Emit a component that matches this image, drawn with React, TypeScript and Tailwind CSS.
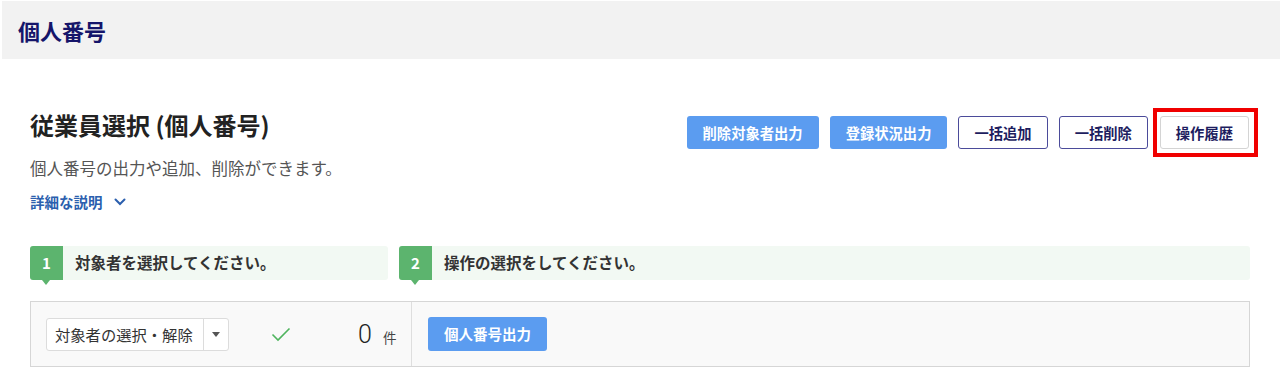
const jp = "font-['Noto_Sans_CJK_JP','Noto_Sans',sans-serif]"

function StepBar({ num, label, className }: { num: number; label: string; className: string }) {
  return (
    <div className={`flex h-[34px] items-stretch rounded-[3px] bg-[#f2f9f3] ${className}`}>
      <div className="relative flex w-[33px] items-center justify-center rounded-l-[3px] bg-[#5cb46e] text-[15px] font-bold text-white">
        {num}
        <span className="absolute left-[12px] top-full h-0 w-0 border-x-[4px] border-t-[5px] border-x-transparent border-t-[#5cb46e]" />
      </div>
      <div className="flex items-center pl-[12px] text-[15.5px] font-bold text-[#333]">{label}</div>
    </div>
  )
}

const blueBtn =
  'h-[33px] rounded-[3px] bg-[#5b9cf0] px-4 text-[14.3px] font-bold text-white'
const outlineBtn =
  'h-[33px] rounded-[3px] border border-[#4b4b9a] bg-white px-[15px] text-[14.3px] font-bold text-[#1d1d5f]'

export default function App() {
  return (
    <div className={`${jp} h-[379px] bg-white`}>
      <div className="ml-[2px] mt-[1px] flex h-[58px] items-center bg-[#f2f2f2] pl-[16px] text-[22px] font-bold text-[#15156a]">
        個人番号
      </div>

      <div className="px-[30px] pt-[50px]">
        <div className="flex items-start justify-between">
          <div>
            <h1 className="text-[24px] font-bold leading-[32px] text-[#222]">従業員選択 (個人番号)</h1>
            <p className="mt-[15px] text-[16.5px] leading-[24px] text-[#555]">
              個人番号の出力や追加、削除ができます。
            </p>
            <button className="mt-[12px] flex h-[20px] items-center gap-[11px] text-[14.5px] font-bold text-[#2b5fae]">
              詳細な説明
              <svg width="12" height="8" viewBox="0 0 12 8" fill="none">
                <path d="M1.5 1.5 6 6l4.5-4.5" stroke="#2b5fae" strokeWidth="2" strokeLinecap="round" />
              </svg>
            </button>
          </div>

          <div className="mt-[7px] flex gap-[11px] pr-[1px]">
            <button className={blueBtn}>削除対象者出力</button>
            <button className={blueBtn}>登録状況出力</button>
            <button className={outlineBtn}>一括追加</button>
            <button className={outlineBtn}>一括削除</button>
            <div className="relative ml-[1px]">
              <button className="h-[33px] rounded-[3px] border border-[#d4d4d4] bg-white px-[15px] text-[14.3px] font-bold text-[#1d1d5f]">
                操作履歴
              </button>
              <span className="pointer-events-none absolute -bottom-[8px] -left-[7px] -right-[9px] -top-[8px] border-[4px] border-[#f00000]" />
            </div>
          </div>
        </div>

        <div className="mt-[34px] flex gap-[11px]">
          <StepBar num={1} label="対象者を選択してください。" className="w-[358px]" />
          <StepBar num={2} label="操作の選択をしてください。" className="flex-1" />
        </div>

        <div className="mt-[21px] flex h-[66px] border border-[#d6d6d6] bg-[#f9f9f9]">
          <div className="flex w-[381px] items-center border-r border-[#dedede] pl-[15px]">
            <div className="flex h-[33px] w-[183px] items-stretch rounded-[3px] border border-[#dcdcdc] bg-white">
              <div className="flex flex-1 items-center pl-[8px] text-[15.3px] text-[#333]">対象者の選択・解除</div>
              <div className="flex w-[25px] items-center justify-center border-l border-[#dcdcdc]">
                <span className="h-0 w-0 border-x-[4px] border-t-[5px] border-x-transparent border-t-[#555]" />
              </div>
            </div>
            <svg className="ml-[42px]" width="20" height="15" viewBox="0 0 20 15" fill="none">
              <path d="M1.5 7.5 7 13 18.5 1.5" stroke="#4fb45e" strokeWidth="1.6" />
            </svg>
            <span className="ml-[67px] text-[25px] font-light leading-none text-[#222] font-['Roboto',sans-serif]">0</span>
            <span className="ml-[11px] mt-[6px] text-[13.5px] text-[#444]">件</span>
          </div>
          <div className="flex items-center pl-[16px]">
            <button className="h-[34px] rounded-[3px] bg-[#5b9cf0] px-4 text-[14.5px] font-bold text-white">
              個人番号出力
            </button>
          </div>
        </div>
      </div>
    </div>
  )
}
